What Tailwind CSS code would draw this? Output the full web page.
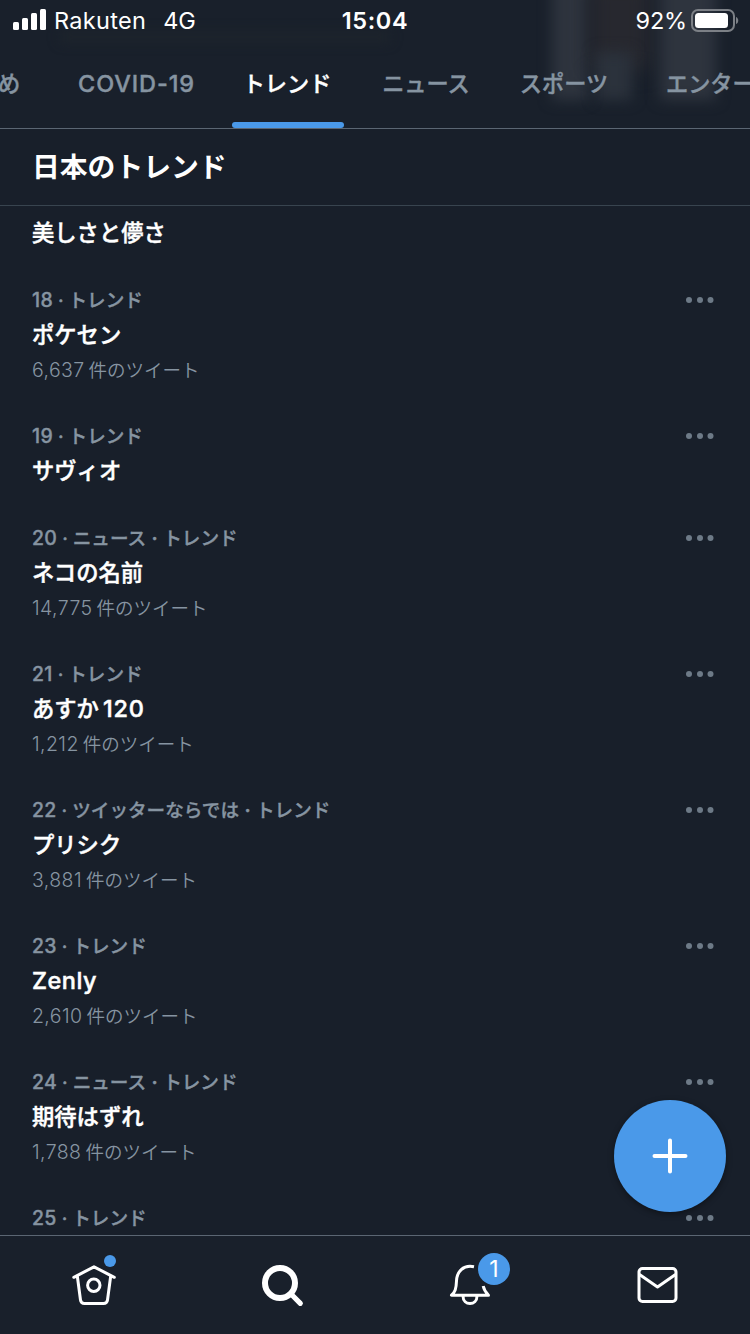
<!DOCTYPE html>
<html lang="ja">
<head>
<meta charset="utf-8">
<title>日本のトレンド</title>
<script src="https://cdn.jsdelivr.net/npm/@tailwindcss/browser@4"></script>
</head>
<body class="bg-[#181f2a]">
<div class="relative w-[750px] h-[1334px] overflow-hidden flex flex-col bg-[#181f2a] text-white font-['Inter','Noto_Sans_CJK_JP',sans-serif] whitespace-nowrap">

  <header class="relative h-[129px] shrink-0 border-b border-[#5b6673] bg-[#19202b] flex flex-col overflow-hidden">
    <div class="absolute left-[552px] top-[-20px] w-[36px] h-[120px] bg-[#2e343e] blur-[7px]"></div>
    <div class="absolute left-[590px] top-[-20px] w-[60px] h-[90px] bg-[#27282f] blur-[10px]"></div>
    <div class="absolute left-[596px] top-[52px] w-[36px] h-[48px] bg-[#2b323c] blur-[7px]"></div>
    <div class="absolute left-[660px] top-[-20px] w-[56px] h-[120px] bg-[#2e343e] blur-[7px]"></div>
    <div class="absolute left-[60px] top-[32px] w-[330px] h-[10px] bg-[#1e252c] blur-[6px]"></div>

    <div class="relative h-10 shrink-0 flex items-center justify-between pl-[13px] pr-[11px]">
      <div class="flex items-center w-[250px]">
        <svg class="w-[33px] h-[21px] -mt-[1px]" viewBox="0 0 33 21" fill="#fff"><rect x="0" y="13" width="6" height="8" rx="1.5"/><rect x="9" y="9" width="6" height="12" rx="1.5"/><rect x="18" y="4" width="6" height="17" rx="1.5"/><rect x="27" y="0" width="6" height="21" rx="1.5"/></svg>
        <span class="ml-[8px] pt-[2px] text-[23.5px] tracking-[0.3px]">Rakuten</span>
        <span class="ml-[17px] pt-[2px] text-[23.5px]">4G</span>
      </div>
      <span class="pt-[2px] pr-[2px] text-[23.5px] font-semibold tracking-[0.6px]">15:04</span>
      <div class="flex items-center justify-end w-[250px]">
        <span class="pt-[2px] text-[23.5px] tracking-[-0.2px]">92%</span>
        <svg class="ml-[4px] w-[48px] h-[23px]" viewBox="0 0 48 23"><rect x="1" y="1" width="42" height="21" rx="6" fill="none" stroke="#7c8086" stroke-width="2"/><rect x="4" y="4" width="33" height="15" rx="3.5" fill="#fff"/><path d="M45 8c3 1 3 6 0 7z" fill="#7c8086"/></svg>
      </div>
    </div>

    <nav class="relative flex-1 flex text-[22.2px] font-medium text-[#8694a1] [-webkit-text-stroke:0.4px]">
      <div class="w-[40px] shrink-0 flex items-center -ml-[2px]">め</div>
      <div class="w-[194px] shrink-0 flex items-center pl-[40px] text-[23.5px] tracking-[0.9px]">COVID-19</div>
      <div class="w-[112px] shrink-0 flex items-center justify-center text-white relative pr-[2px]">トレンド<div class="absolute left-0 bottom-0 w-[112px] h-[6px] rounded-full bg-[#4a99e9]"></div></div>
      <div class="w-[164px] shrink-0 flex items-center justify-center">ニュース</div>
      <div class="w-[112px] shrink-0 flex items-center justify-center">スポーツ</div>
      <div class="shrink-0 flex items-center pl-[46px]">エンター</div>
    </nav>
  </header>

  <h1 class="h-[77px] shrink-0 border-b border-[#38444f] flex items-center pt-[2px] pl-8 text-[27.8px] font-bold">日本のトレンド</h1>

  <main class="flex-1 min-h-0 overflow-hidden pt-[9px] pl-8 pr-9 flex flex-col gap-8 [&_h2]:[-webkit-text-stroke:0.45px] [&_article>div]:[-webkit-text-stroke:0.35px]">
    <article><h2 class="h-9 flex items-center text-[22.3px] font-medium">美しさと儚さ</h2></article>
    <article>
      <div class="h-[34px] flex items-center justify-between text-[#8694a1] font-medium"><p class="pt-[2px] text-[18.6px]"><span class="text-[19.5px] tracking-[0.3px]">18</span> · トレンド</p><svg class="w-7 h-1.5" viewBox="0 0 28 6" fill="#6d7a87"><circle cx="3" cy="3" r="3"/><circle cx="14" cy="3" r="3"/><circle cx="24.5" cy="3" r="3"/></svg></div>
      <h2 class="h-9 flex items-center text-[22.3px] font-medium">ポケセン</h2>
      <p class="h-[34px] pt-[2px] flex items-center gap-1 text-[#8694a1] text-[18.5px] font-[350]"><span class="text-[19.5px] tracking-[0.4px]">6,637</span>件のツイート</p>
    </article>
    <article>
      <div class="h-[34px] flex items-center justify-between text-[#8694a1] font-medium"><p class="pt-[2px] text-[18.6px]"><span class="text-[19.5px] tracking-[0.3px]">19</span> · トレンド</p><svg class="w-7 h-1.5" viewBox="0 0 28 6" fill="#6d7a87"><circle cx="3" cy="3" r="3"/><circle cx="14" cy="3" r="3"/><circle cx="24.5" cy="3" r="3"/></svg></div>
      <h2 class="h-9 flex items-center text-[22.3px] font-medium">サヴィオ</h2>
    </article>
    <article>
      <div class="h-[34px] flex items-center justify-between text-[#8694a1] font-medium"><p class="pt-[2px] text-[18.6px]"><span class="text-[19.5px] tracking-[0.3px]">20</span> · ニュース<span class="px-px font-bold"> · </span>トレンド</p><svg class="w-7 h-1.5" viewBox="0 0 28 6" fill="#6d7a87"><circle cx="3" cy="3" r="3"/><circle cx="14" cy="3" r="3"/><circle cx="24.5" cy="3" r="3"/></svg></div>
      <h2 class="h-9 flex items-center text-[22.3px] font-medium">ネコの名前</h2>
      <p class="h-[34px] pt-[2px] flex items-center gap-1 text-[#8694a1] text-[18.5px] font-[350]"><span class="text-[19.5px] tracking-[0.4px]">14,775</span>件のツイート</p>
    </article>
    <article>
      <div class="h-[34px] flex items-center justify-between text-[#8694a1] font-medium"><p class="pt-[2px] text-[18.6px]"><span class="text-[19.5px] tracking-[0.3px]">21</span> · トレンド</p><svg class="w-7 h-1.5" viewBox="0 0 28 6" fill="#6d7a87"><circle cx="3" cy="3" r="3"/><circle cx="14" cy="3" r="3"/><circle cx="24.5" cy="3" r="3"/></svg></div>
      <h2 class="h-9 flex items-center gap-1 text-[22.3px] font-medium">あすか<span class="text-[23.5px] tracking-[0.8px]">120</span></h2>
      <p class="h-[34px] pt-[2px] flex items-center gap-1 text-[#8694a1] text-[18.5px] font-[350]"><span class="text-[19.5px] tracking-[0.4px]">1,212</span>件のツイート</p>
    </article>
    <article>
      <div class="h-[34px] flex items-center justify-between text-[#8694a1] font-medium"><p class="pt-[2px] text-[18.6px]"><span class="text-[19.5px] tracking-[0.3px]">22</span> · ツイッターならでは<span class="px-px font-bold"> · </span>トレンド</p><svg class="w-7 h-1.5" viewBox="0 0 28 6" fill="#6d7a87"><circle cx="3" cy="3" r="3"/><circle cx="14" cy="3" r="3"/><circle cx="24.5" cy="3" r="3"/></svg></div>
      <h2 class="h-9 flex items-center text-[22.3px] font-medium">プリシク</h2>
      <p class="h-[34px] pt-[2px] flex items-center gap-1 text-[#8694a1] text-[18.5px] font-[350]"><span class="text-[19.5px] tracking-[0.4px]">3,881</span>件のツイート</p>
    </article>
    <article>
      <div class="h-[34px] flex items-center justify-between text-[#8694a1] font-medium"><p class="pt-[2px] text-[18.6px]"><span class="text-[19.5px] tracking-[0.3px]">23</span> · トレンド</p><svg class="w-7 h-1.5" viewBox="0 0 28 6" fill="#6d7a87"><circle cx="3" cy="3" r="3"/><circle cx="14" cy="3" r="3"/><circle cx="24.5" cy="3" r="3"/></svg></div>
      <h2 class="h-9 flex items-center text-[23.5px] font-medium tracking-[0.5px]">Zenly</h2>
      <p class="h-[34px] pt-[2px] flex items-center gap-1 text-[#8694a1] text-[18.5px] font-[350]"><span class="text-[19.5px] tracking-[0.4px]">2,610</span>件のツイート</p>
    </article>
    <article>
      <div class="h-[34px] flex items-center justify-between text-[#8694a1] font-medium"><p class="pt-[2px] text-[18.6px]"><span class="text-[19.5px] tracking-[0.3px]">24</span> · ニュース<span class="px-px font-bold"> · </span>トレンド</p><svg class="w-7 h-1.5" viewBox="0 0 28 6" fill="#6d7a87"><circle cx="3" cy="3" r="3"/><circle cx="14" cy="3" r="3"/><circle cx="24.5" cy="3" r="3"/></svg></div>
      <h2 class="h-9 flex items-center text-[22.3px] font-medium">期待はずれ</h2>
      <p class="h-[34px] pt-[2px] flex items-center gap-1 text-[#8694a1] text-[18.5px] font-[350]"><span class="text-[19.5px] tracking-[0.4px]">1,788</span>件のツイート</p>
    </article>
    <article>
      <div class="h-[34px] flex items-center justify-between text-[#8694a1] font-medium"><p class="pt-[2px] text-[18.6px]"><span class="text-[19.5px] tracking-[0.3px]">25</span> · トレンド</p><svg class="w-7 h-1.5" viewBox="0 0 28 6" fill="#6d7a87"><circle cx="3" cy="3" r="3"/><circle cx="14" cy="3" r="3"/><circle cx="24.5" cy="3" r="3"/></svg></div>
    </article>
  </main>

  <footer class="h-[99px] shrink-0 border-t border-[#5b6673] bg-[#19202b] grid grid-cols-4">
    <svg class="w-full h-[98px]" viewBox="0 1236 187.5 98" fill="none" stroke="#fff" stroke-width="3" stroke-linecap="round" stroke-linejoin="round"><path d="M73.800 1277.300L94 1266.800L114.300 1277.300M77.300 1276L80.500 1300Q81 1303.500 84.500 1303.500H103.500Q107 1303.500 107.500 1300L110.700 1276"/><circle cx="93.800" cy="1285.300" r="6.200"/><circle cx="110" cy="1261" r="6" fill="#4a99e9" stroke="none"/></svg>
    <svg class="w-full h-[98px]" viewBox="188 1236 187.500 98" fill="none" stroke="#fff" stroke-linecap="round"><circle cx="280" cy="1283" r="15" stroke-width="6"/><path d="M292 1295L300.300 1303.300" stroke-width="5.200"/></svg>
    <div class="relative">
      <svg class="w-full h-[98px]" viewBox="375 1236 187.500 98" fill="none" stroke="#fff" stroke-width="3" stroke-linejoin="round"><path d="M474 1266.800C463 1264.500 456.800 1272 456.500 1281C456.200 1289 455 1292 451.500 1295.200H488.500C485.300 1292 484 1290 483.200 1286M463 1296C463 1306 477 1306 477 1296"/></svg>
      <span class="absolute left-[103px] top-[17px] size-8 rounded-full bg-[#4a99e9] flex items-center justify-center text-[23px]">1</span>
    </div>
    <svg class="w-full h-[98px]" viewBox="562.500 1236 187.500 98" fill="none" stroke="#fff" stroke-width="3" stroke-linejoin="round"><rect x="638.500" y="1268.500" width="37" height="33" rx="3.500"/><path d="M639 1274.500L657 1287L675 1274.500"/></svg>
  </footer>

  <button class="absolute left-[614px] top-[1100px] size-28 rounded-full bg-[#4a99e9] shadow-[0_2px_6px_rgba(0,0,0,0.4)] flex items-center justify-center" aria-label="ツイート">
    <svg class="w-9 h-9" viewBox="0 0 36 36" stroke="#fff" stroke-width="4" stroke-linecap="round"><path d="M18 2.500V33.500M2.500 18H33.500"/></svg>
  </button>
</div>
</body>
</html>
